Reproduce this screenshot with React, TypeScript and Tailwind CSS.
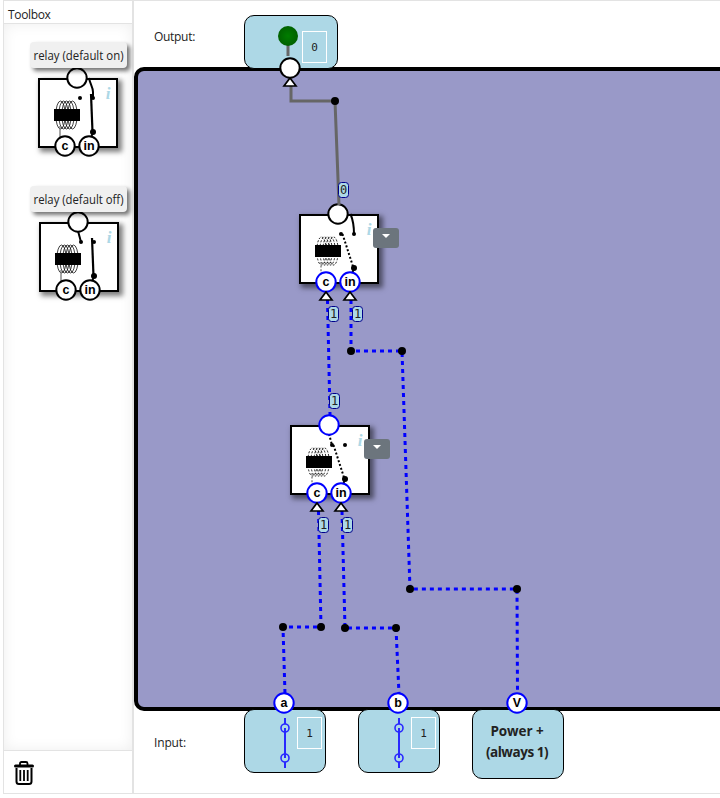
import React from "react";

type RelayProps = { defaultOn?: boolean; powered?: boolean; outputLive?: boolean; menu?: boolean };

const UI = "font-['Open_Sans','Noto_Sans',sans-serif]";

function Port({ x, y, label, live }: { x: number; y: number; label?: string; live?: boolean }) {
  return (
    <g>
      <circle cx={x} cy={y} r={9.7} fill="#fff" stroke={live ? "#0000ff" : "#000"} strokeWidth={2} />
      {label && (
        <text x={x} y={y + 4} textAnchor="middle" fontSize={12.5} fontWeight={700} fontFamily="'Liberation Sans', Arial, sans-serif">
          {label}
        </text>
      )}
    </g>
  );
}

function Relay({ defaultOn, powered, outputLive, menu }: RelayProps) {
  return (
    <div className="relative h-[70px] w-[80px] shrink-0 border-2 border-black bg-white shadow-[3px_3px_5px_1px_rgba(0,0,0,0.5)]">
      <svg className="absolute -top-[2px] -left-[2px] overflow-visible" width="80" height="70" viewBox="0 0 80 70">
        <g fill="none" stroke="#111" strokeWidth={powered ? 1 : 0.8} strokeDasharray={powered ? "2 1.6" : undefined}>
          {[22.5, 25.5, 28.5, 31.5, 34.5].map((x) => (
            <ellipse key={x} cx={x} cy={37} rx={4.7} ry={14} />
          ))}
          <path d="M22 48V62" stroke="#777" strokeWidth="1.3" />
        </g>
        <rect x="16" y="31" width="26" height="12" />
        <circle cx="42" cy="20" r="2" />
        <circle cx="55" cy="20" r="2" />
        {defaultOn ? (
          <path d={powered ? "M51.500 0C54 6 55 12 55 20" : "M51 0C52 6 55 9 55 14V20"} fill="none" stroke="#000" strokeWidth="2" />
        ) : (
          <path d="M39 9L42 20" stroke="#000" strokeWidth="2" strokeDasharray={powered ? "2 2" : undefined} />
        )}
        {powered ? (
          <path d="M43.500 20L54.500 54" stroke="#000" strokeWidth="2" strokeDasharray="2 2" />
        ) : (
          <path d="M53 16L54.500 54" stroke="#000" strokeWidth="2.2" />
        )}
        <path d="M55 54L53 60" stroke="#000" strokeWidth="2" />
        <circle cx="55" cy="54" r="3" />
        <text x="70" y="21" textAnchor="middle" fontSize="17" fontStyle="italic" fontWeight="700" fill="#add8e6" fontFamily="'Liberation Serif', serif">
          i
        </text>
        <Port x={39} y={0} live={outputLive} />
        <Port x={27} y={68} label="c" live={powered} />
        <Port x={51} y={68} label="in" live={powered} />
      </svg>
      {menu && (
        <button className="absolute top-[12px] left-[72px] flex h-[20px] w-[26px] justify-center rounded-[3px] bg-[#6c757d] pt-[6px]">
          <svg width="8" height="4" viewBox="0 0 8 4">
            <path d="M0 0H8L4 4Z" fill="#fff" />
          </svg>
        </button>
      )}
    </div>
  );
}

function Tool({ name, defaultOn }: { name: string; defaultOn?: boolean }) {
  return (
    <div className="flex h-[144px] flex-col items-start">
      <div className="z-10 ml-px h-[26px] w-[97px] rounded-[4px] bg-[#f0f0f0] shadow-[3px_3px_4px_rgba(0,0,0,0.55)]">
        <svg className="block overflow-visible" width="97" height="26">
          <text x="3.500" y="18" fontSize="12.5" textLength="90" lengthAdjust="spacingAndGlyphs" fill="#222">{name}</text>
        </svg>
      </div>
      <div className={defaultOn ? "mt-[10px] ml-[9px]" : "mt-[10px] ml-[10px]"}>
        <Relay defaultOn={defaultOn} />
      </div>
    </div>
  );
}

function ValueBox({ value }: { value: number }) {
  return (
    <div className="flex h-[32px] w-[25px] items-center justify-center border border-white pt-[2px] font-['DejaVu_Sans_Mono',monospace] text-[11px] text-[#222]">
      {value}
    </div>
  );
}

function InputSwitch() {
  return (
    <div className="flex h-[64px] w-[82px] shrink-0 rounded-[10px] border border-black bg-[#add8e6]">
      <svg className="mt-[8px] ml-[35px] shrink-0" width="10" height="52" viewBox="0 0 10 52" fill="none" stroke="#2929ff" strokeWidth="1.6">
        <path d="M5 0V6M5 10V40M5 44V50" strokeWidth="2" />
        <circle cx="5" cy="10" r="4" />
        <circle cx="5" cy="40" r="4" />
      </svg>
      <div className="mt-[7px] ml-[7px]">
        <ValueBox value={1} />
      </div>
    </div>
  );
}

const wires = [
  "M327.5 300L330 415",
  "M351 300V351H402L410 589H517L517.5 694",
  "M318.5 511L321 627H283L285 694",
  "M342 511L345 628H396L399 694",
];
const joints = [[335, 101], [351, 351], [402, 351], [410, 589], [517, 589], [321, 627], [283, 627], [345, 628], [396, 628]];
const arrows = [[290, 78], [326, 292], [350, 292], [317, 503], [341, 503]];
const tags = [[343.5, 190, 0], [333.5, 314, 1], [357.5, 314, 1], [334.5, 401, 1], [323.5, 525, 1], [347.5, 525, 1]];

function Wiring() {
  return (
    <svg className="pointer-events-none absolute top-0 left-0" width="587" height="798" viewBox="133 0 587 798">
      <path d="M291 86V101H335L339 205" fill="none" stroke="#666" strokeWidth="3" />
      {wires.map((d) => (
        <path key={d} d={d} fill="none" stroke="#0000ff" strokeWidth="3" strokeDasharray="4 4" />
      ))}
      {joints.map(([x, y]) => (
        <circle key={`${x}-${y}`} cx={x} cy={y} r="4" />
      ))}
      {arrows.map(([x, y]) => (
        <path key={`${x}-${y}`} d={`M${x} ${y}L${x + 6} ${y + 8}H${x - 6}Z`} fill="#fff" stroke="#000" strokeWidth="1.7" />
      ))}
      {tags.map(([x, y, v]) => (
        <g key={`${x}-${y}`}>
          <rect x={x - 5} y={y - 7.5} width="10" height="15" rx="3" fill="#add8e6" stroke="#00008b" strokeWidth="1" />
          <text x={x} y={y + 4.2} textAnchor="middle" fontSize="12" fill="#222" fontFamily="'DejaVu Sans Mono', monospace">{v}</text>
        </g>
      ))}
      <Port x={290} y={68} />
      <Port x={284} y={703} label="a" live />
      <Port x={398} y={703} label="b" live />
      <Port x={517} y={703} label="V" live />
    </svg>
  );
}

export default function App() {
  return (
    <div className={`${UI} flex h-[798px] w-[720px] overflow-hidden bg-white pl-[3px] text-[12px] text-[#222]`}>
      <aside className="flex h-[794px] w-[130px] shrink-0 flex-col border border-[#e3e3e3]">
        <div className="h-[23px] border-b border-[#e3e3e3] pt-[5px] pl-[4px] leading-[18px]">
          <span className="tracking-[-0.35px]">Toolbox</span>
        </div>
        <div className="flex-1 pt-[18px] pl-[25px] shadow-[inset_0_0_14px_rgba(0,0,0,0.07)]">
          <Tool name="relay (default on)" defaultOn />
          <Tool name="relay (default off)" />
        </div>
        <div className="h-[43px] border-t border-[#e3e3e3] pt-[9px] pl-[9px]">
          <svg width="22" height="26" viewBox="0 0 22 26" fill="none" stroke="#000">
            <path d="M7 5V3.5Q7 2 8.500 2H13Q14.500 2 14.500 3.500V5" strokeWidth="1.8" />
            <path d="M2.500 6H19.500" strokeWidth="3" strokeLinecap="round" />
            <path d="M3.500 8V21.500Q3.500 24 6 24H16Q18.500 24 18.500 21.500V8" strokeWidth="2" />
            <path d="M7.300 10V21M11 10V21M14.700 10V21" strokeWidth="1.8" />
          </svg>
        </div>
      </aside>
      <main className="relative flex h-[794px] w-[587px] shrink-0 flex-col border-y border-l border-[#e3e3e3]">
        <div className="relative z-10 flex h-[66px] shrink-0 pl-[20px]">
          <div className="w-[90px] pt-[27px] leading-[18px] tracking-[-0.3px]">Output:</div>
          <div className="mt-[14px] flex h-[54px] w-[94px] shrink-0 rounded-[10px] border border-black bg-[#add8e6]">
            <svg className="mt-[10px] ml-[33px] shrink-0" width="20" height="30" viewBox="0 0 20 30">
              <defs>
                <radialGradient id="lamp"><stop offset="0" stopColor="#007d00" /><stop offset="1" stopColor="#006100" /></radialGradient>
              </defs>
              <path d="M10 18V30" stroke="#666" strokeWidth="3" />
              <circle cx="10" cy="10" r="10" fill="url(#lamp)" />
            </svg>
            <div className="mt-[15px] ml-[4px]"><ValueBox value={0} /></div>
          </div>
        </div>
        <div className="relative h-[644px] w-[600px] shrink-0 rounded-[10px] border-4 border-black bg-[#9999c8]">
          <div className="absolute top-[143px] left-[161px]"><Relay defaultOn powered menu /></div>
          <div className="absolute top-[354px] left-[152px]"><Relay powered outputLive menu /></div>
        </div>
        <div className="relative z-10 -mt-[2px] flex items-start pl-[20px]">
          <div className="w-[90px] pt-[25px] leading-[18px] tracking-[-0.15px]">Input:</div>
          <InputSwitch />
          <div className="ml-[32px] flex"><InputSwitch /></div>
          <div className="ml-[32px] h-[70px] w-[92px] rounded-[10px] border border-black bg-[#add8e6] pt-[11px] text-center text-[13.5px] leading-[21px] font-bold">
            <div className="pr-[2px] tracking-[-0.1px]">Power +</div>
            <div className="pr-[2px] tracking-[-0.45px]">(always 1)</div>
          </div>
        </div>
        <div className="absolute -top-px -left-px z-20"><Wiring /></div>
      </main>
    </div>
  );
}
